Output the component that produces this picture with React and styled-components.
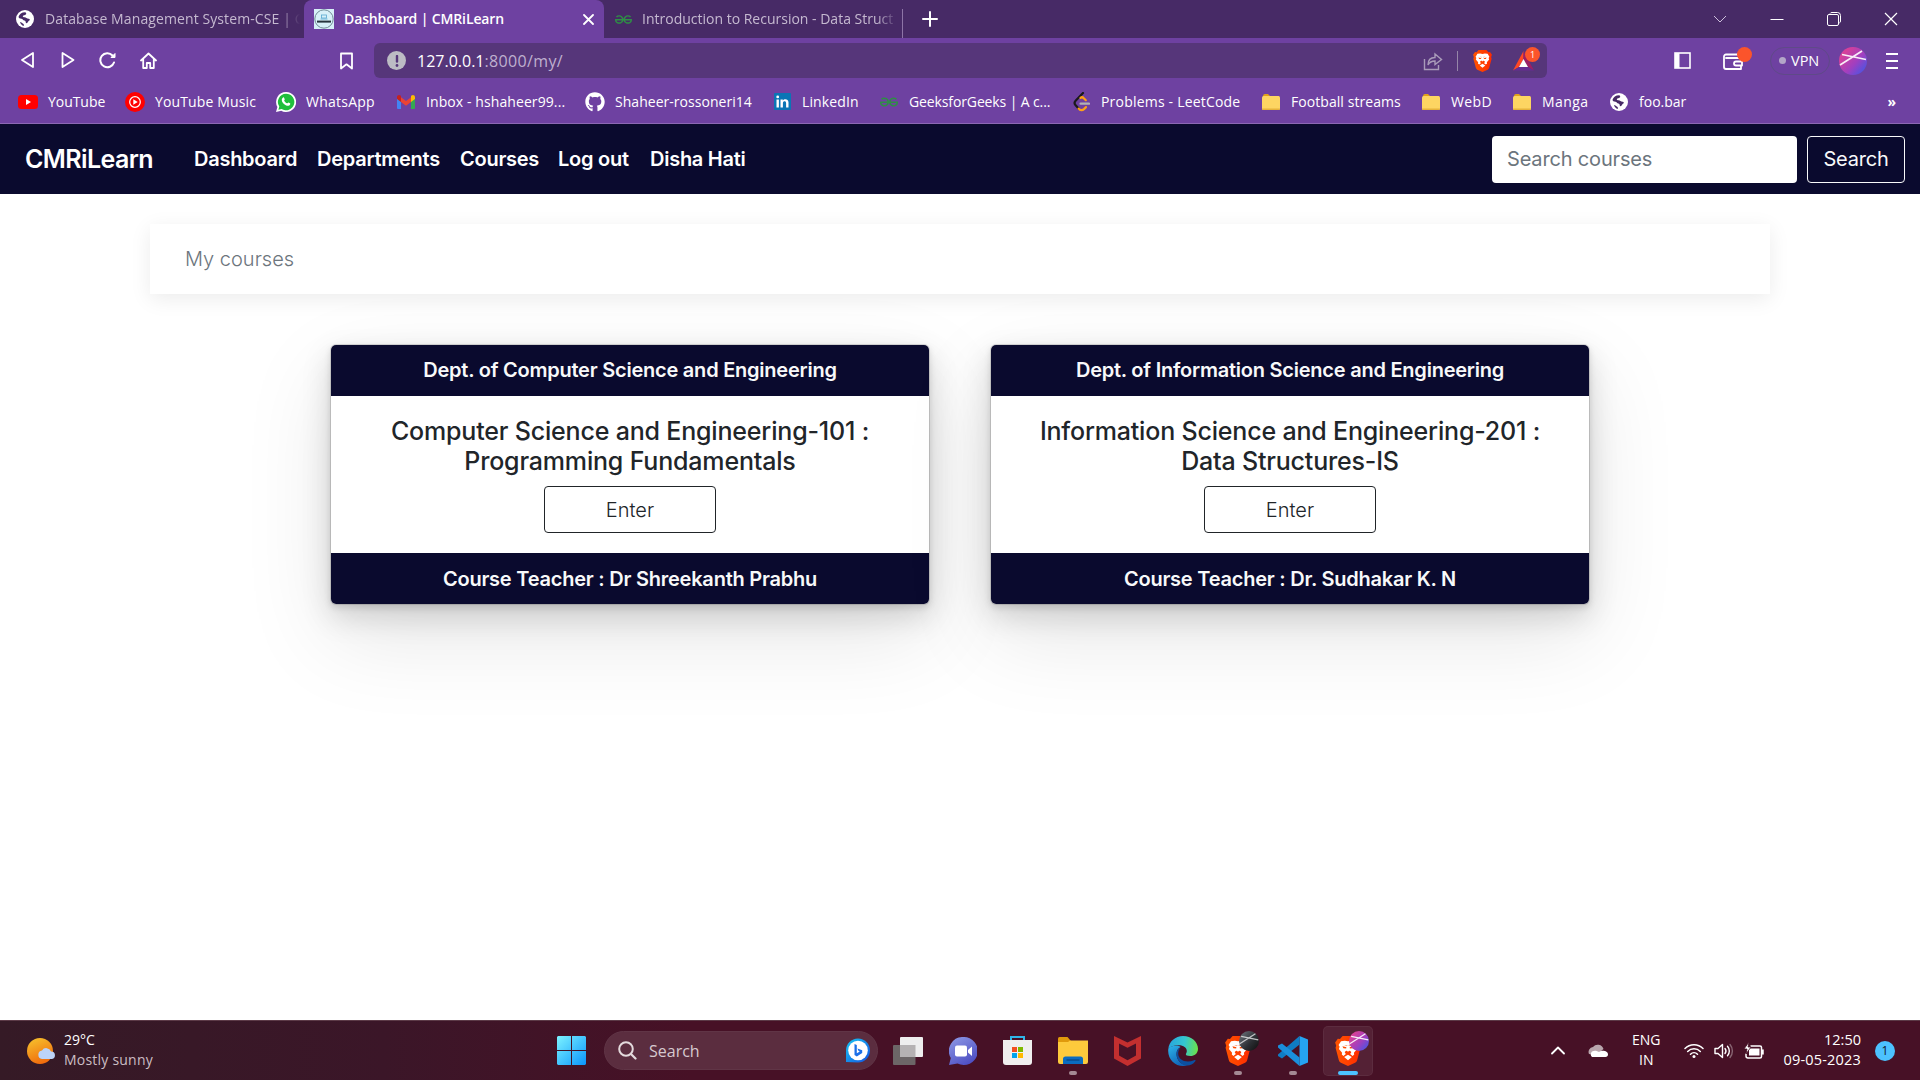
import React from "react";
import styled, { createGlobalStyle } from "styled-components";
import { FaGithub } from "react-icons/fa";
import { SiGeeksforgeeks } from "react-icons/si";

const ui = `"Open Sans", "Noto Sans", sans-serif`;
const web = `Inter, "Liberation Sans", sans-serif`;
const navy = "#0a0a2e";

const Global = createGlobalStyle`
  * { box-sizing: border-box; }
  body { margin: 0; background: #fff; overflow: hidden; }
  svg { display: block; flex: none; }
`;

const Screen = styled.div`
  width: 1920px;
  height: 1080px;
  display: flex;
  flex-direction: column;
  overflow: hidden;
  background: #fff;
  font-family: ${ui};
`;

const Label = styled.span`
  flex: none;
  width: ${(p) => (p.$w ? `${p.$w}px` : "auto")};
  font-size: ${(p) => p.$size || 14}px;
  line-height: 20px;
  letter-spacing: ${(p) => p.$ls || 0}px;
  font-weight: ${(p) => p.$weight || 400};
  color: ${(p) => p.$color || "#fff"};
  white-space: nowrap;
`;

/* ---------- browser chrome ---------- */

const TabStrip = styled.div`
  height: 38px;
  display: flex;
  background: #472a66;
  flex: none;
`;

const Tab = styled.div`
  width: ${(p) => p.$width}px;
  height: 38px;
  padding: 0 ${(p) => p.$right || 4}px 0 ${(p) => p.$left}px;
  display: flex;
  align-items: center;
  gap: ${(p) => p.$gap || 10}px;
  background: ${(p) => (p.$active ? "#6e41a1" : "transparent")};
  border-radius: ${(p) => (p.$active ? "8px 8px 0 0" : "0")};
`;

const TabTitle = styled(Label)`
  flex: 1;
  overflow: hidden;
  mask-image: ${(p) => (p.$fade ? "linear-gradient(90deg, #000 calc(100% - 22px), transparent)" : "none")};
`;

const TabDivider = styled.div`
  width: 1px;
  height: 29px;
  margin-top: 9px;
  background: #8d74a6;
`;

const NewTab = styled.div`
  width: 54px;
  display: flex;
  align-items: center;
  justify-content: center;
`;

const WindowButtons = styled.div`
  margin-left: auto;
  padding-right: 22px;
  display: flex;
  align-items: center;
  gap: 43px;
`;

const Toolbar = styled.div`
  height: 43px;
  flex: none;
  padding: 2px 22px 0 20px;
  display: flex;
  align-items: center;
  background: #6e41a1;
`;

const NavButtons = styled.div`
  display: flex;
  gap: 23.5px;
  width: 318px;
`;

const BookmarkButton = styled.div`
  width: 36px;
`;

const AddressBar = styled.div`
  width: 1173px;
  height: 35px;
  padding: 0 13px;
  display: flex;
  align-items: center;
  background: #56367a;
  border-radius: 6px;
`;

const InfoDot = styled.div`
  width: 19px;
  height: 19px;
  border-radius: 50%;
  margin-right: 11px;
  display: flex;
  align-items: center;
  justify-content: center;
  background: #bcbcc4;
`;

const AddressActions = styled.div`
  margin-left: auto;
  display: flex;
  align-items: center;
`;

const Bar = styled.div`
  width: 1px;
  height: 20px;
  margin: 0 15px 0 14px;
  background: #9686a9;
`;

const Badged = styled.div`
  position: relative;
  margin-left: ${(p) => p.$ml || 0}px;
`;

const Badge = styled.span`
  position: absolute;
  left: ${(p) => p.$x}px;
  top: ${(p) => p.$y}px;
  width: 15px;
  height: 15px;
  border-radius: 50%;
  background: #fb542b;
  color: #fff;
  font-size: 9px;
  line-height: 15px;
  text-align: center;
`;

const ProfileBall = styled.div`
  position: absolute;
  left: 14px;
  top: -5px;
`;

const ToolbarRight = styled.div`
  margin-left: auto;
  display: flex;
  align-items: center;
`;

const Vpn = styled.div`
  width: 60px;
  height: 28px;
  margin: 0 9px 0 27px;
  padding-left: 8px;
  display: flex;
  align-items: center;
  gap: 5px;
  border: 1px solid #5f4a88;
  border-radius: 14px;
`;

const VpnDot = styled.i`
  width: 7px;
  height: 7px;
  border-radius: 50%;
  background: #b3a6c8;
`;

const Bookmarks = styled.div`
  height: 43px;
  flex: none;
  padding: 0 24px 1px 18px;
  display: flex;
  align-items: center;
  background: #6e41a1;
  border-bottom: 1px solid #8c68b4;
`;

const Bookmark = styled.div`
  display: flex;
  align-items: center;
  flex: none;
  gap: 10px;
  margin-right: 20px;
`;

const More = styled(Label)`
  margin-left: auto;
`;

const IconBox = styled.div`
  width: 20px;
  height: 20px;
  flex: none;
  display: flex;
  align-items: center;
  justify-content: center;
`;

/* ---------- page ---------- */

const SiteNav = styled.nav`
  height: 70px;
  flex: none;
  padding: 0 15px 0 25px;
  display: flex;
  align-items: center;
  background: ${navy};
  font-family: ${web};
`;

const Brand = styled.a`
  width: 169px;
  color: #fff;
  font-size: 25px;
  font-weight: 600;
  letter-spacing: -0.6px;
`;

const NavLink = styled.a`
  width: ${(p) => p.$w}px;
  margin-right: 20px;
  white-space: nowrap;
  color: #fff;
  font-size: 20px;
  font-weight: 600;
  letter-spacing: -0.26px;
`;

const SearchInput = styled.div`
  width: 305px;
  height: 47px;
  margin: 0 10px 0 auto;
  padding: 0 15px;
  display: flex;
  align-items: center;
  background: #fff;
  border-radius: 4px;
  color: #6c757d;
  font-size: 20px;
  letter-spacing: -0.17px;
`;

const SearchButton = styled.button`
  width: 98px;
  height: 47px;
  padding: 0;
  background: transparent;
  border: 1px solid #f8f9fa;
  border-radius: 4px;
  color: #f8f9fa;
  font: 400 20px ${web};
  letter-spacing: -0.2px;
`;

const Page = styled.main`
  flex: 1;
  font-family: ${web};
`;

const Heading = styled.div`
  width: 1620px;
  height: 70px;
  margin: 30px auto 0;
  padding-left: 35px;
  display: flex;
  align-items: center;
  background: #fff;
  color: #6c757d;
  font-size: 20px;
  font-weight: 300;
  box-shadow: 0 5px 20px rgba(0, 0, 0, 0.08);
`;

const Cards = styled.div`
  margin-top: 50px;
  padding-left: 330px;
  display: flex;
  gap: 60px;
`;

const Card = styled.article`
  width: 600px;
  height: 261px;
  display: flex;
  flex-direction: column;
  border: 1px solid rgba(0, 0, 0, 0.12);
  border-radius: 6px;
  overflow: hidden;
  background: #fff;
  background-clip: padding-box;
  box-shadow: 0 3px 6px rgba(0, 0, 0, 0.11), 0 12px 30px rgba(0, 0, 0, 0.14), 0 32px 90px rgba(0, 0, 0, 0.1);
`;

const CardBand = styled.div`
  height: 51px;
  flex: none;
  padding-bottom: ${(p) => (p.$top ? 2 : 0)}px;
  display: flex;
  align-items: center;
  justify-content: center;
  background: ${navy};
  color: #f8f9fa;
  font-size: 20px;
  font-weight: 600;
  letter-spacing: -0.23px;
`;

const CardBody = styled.div`
  flex: 1;
  padding-top: 20px;
  display: flex;
  flex-direction: column;
  align-items: center;
`;

const CardTitle = styled.h5`
  margin: 0 0 10px;
  font-size: 25px;
  line-height: 30px;
  font-weight: 500;
  letter-spacing: -0.18px;
  color: #212529;
  text-align: center;
  white-space: pre-line;
`;

const EnterButton = styled.button`
  width: 172px;
  height: 47px;
  padding: 0;
  background: transparent;
  border: 1px solid #212529;
  border-radius: 4px;
  color: #212529;
  font: 300 20px ${web};
`;

/* ---------- taskbar ---------- */

const Taskbar = styled.footer`
  height: 60px;
  flex: none;
  display: flex;
  align-items: center;
  background: linear-gradient(90deg, #351a26 0%, #3b1628 20%, #471126 36%, #471126 100%);
  border-top: 1px solid #5c3a47;
`;

const Weather = styled.div`
  width: 530px;
  padding-left: 26px;
  display: flex;
  align-items: center;
  gap: 8px;
`;

const Stack = styled.div`
  display: flex;
  flex-direction: column;
  padding-bottom: 2px;
  align-items: ${(p) => p.$align || "flex-start"};
`;

const Launcher = styled.div`
  display: flex;
  align-items: center;
`;

const AppSlot = styled.div`
  position: relative;
  width: ${(p) => p.$w || 55}px;
  height: 50px;
  display: flex;
  align-items: center;
  justify-content: center;
  background: ${(p) => (p.$active ? "rgba(255,255,255,.07)" : "transparent")};
  box-shadow: ${(p) => (p.$active ? "inset 0 0 0 1px rgba(255,255,255,.05)" : "none")};
  border-radius: 5px;
  &::after {
    content: "";
    display: ${(p) => (p.$running || p.$active ? "block" : "none")};
    position: absolute;
    bottom: 1px;
    width: ${(p) => (p.$active ? 20 : 8)}px;
    height: 4px;
    border-radius: 2px;
    background: ${(p) => (p.$active ? "#4cc2ff" : "#a48a94")};
  }
`;

const TaskSearch = styled.div`
  width: 274px;
  height: 39px;
  margin: 0 8px 0 5px;
  padding: 0 7px 0 13px;
  display: flex;
  align-items: center;
  border-radius: 20px;
  background: #5b2d3f;
  border: 1px solid #603546;
  & > svg:last-child { margin-left: auto; }
`;

const Tray = styled.div`
  margin-left: auto;
  padding-right: 25px;
  display: flex;
  align-items: center;
`;

const Notice = styled.div`
  width: 20px;
  height: 20px;
  margin-left: 14px;
  border-radius: 50%;
  background: #4cc2ff;
  color: #10202c;
  font-size: 12px;
  line-height: 19px;
  text-align: center;
`;

const Gap = styled.i`
  width: ${(p) => p.$w}px;
  flex: none;
`;

/* ---------- icons ---------- */

const Svg = ({ w = 20, h, vb, children, ...rest }) => (
  <svg width={w} height={h || w} viewBox={vb || `0 0 ${w} ${h || w}`} fill="none" {...rest}>{children}</svg>
);
const line = { stroke: "#fff", strokeWidth: 1.8, strokeLinejoin: "round", strokeLinecap: "round" };

const Globe = () => (
  <Svg w={18}>
    <circle cx="9" cy="9" r="9" fill="#fff" />
    <path d="M9.5 2.2C6 2 3.4 4 2.6 6.600c-.3 1.700 1.300 2 2.800 2.100 1.500.1 1.600 1.800 3 1.900 1.800.1.8 2.400 2.200 2.600 1.400.1 1.200-2 2.600-2.600 1-.5.8-1.800-.6-1.900-2-.1-2.600-1.800-4.400-1.500-1.300.2-2-.9-.8-1.600 1.300-.7 2.700-.6 2.900-1.800z" fill="#472a66" />
    <path d="M4 12c1.600.2 2 1.300 3.200 1.700.9.4.7 1.500.6 2.300C5.900 15.500 4.600 14 4 12z" fill="#472a66" />
  </Svg>
);
const CmrIcon = () => (
  <Svg w={20}>
    <rect width="20" height="20" fill="#d7f0f8" />
    <circle cx="10" cy="10" r="9.200" stroke="#6f8a94" strokeWidth="1" />
    <rect x="7.500" y="6" width="5" height="3" stroke="#56a7cf" strokeWidth=".8" />
    <path d="M6.500 10h7" stroke="#56a7cf" strokeWidth=".8" />
    <path d="M3 12.600h14" stroke="#25343c" strokeWidth="2" />
  </Svg>
);
const YouTube = () => (
  <Svg w={20} h={14}><rect width="20" height="14" rx="3.500" fill="#f00" /><path d="M8 4l5 3-5 3z" fill="#fff" /></Svg>
);
const YtMusic = () => (
  <Svg w={20}><circle cx="10" cy="10" r="10" fill="#f00" /><circle cx="10" cy="10" r="5.300" stroke="#fff" strokeWidth="1.200" /><path d="M8.300 7.300l4.400 2.700-4.400 2.700z" fill="#fff" /></Svg>
);
const WhatsApp = () => (
  <Svg w={20}>
    <path d="M10 0a10 10 0 1 1-4.800 18.700L0 20l1.400-5A10 10 0 0 1 10 0z" fill="#fff" />
    <path d="M10 1.700a8.300 8.300 0 1 1-4.400 15.300L2.400 17.700l.9-3.100A8.300 8.300 0 0 1 10 1.700z" fill="#1fbf3c" />
    <path d="M7 5.400c.6-.4 1 0 1.200.6l.5 1.200c.2.600-.7 1-.5 1.500.6 1.200 1.600 2.100 2.900 2.600.5.100.9-1 1.400-.8l1.500.8c.9.500-.3 2.400-1.600 2.500-3.100.2-7-3.500-6.600-6.300.1-.8.600-1.700 1.200-2.100z" fill="#fff" />
  </Svg>
);
const Gmail = () => (
  <Svg w={18} h={14}>
    <path d="M0 2v11a1 1 0 0 0 1 1h3V5z" fill="#4285f4" />
    <path d="M18 2v11a1 1 0 0 1-1 1h-3V5z" fill="#34a853" />
    <path d="M4 2.200l5 3.800 5-3.800v4.800L9 10.800 4 7z" fill="#ea4335" />
    <path d="M0 2.200C0 .3 2.100-.6 3.500.6L4 1v6L0 4z" fill="#c5221f" />
    <path d="M18 2.200c0-1.900-2.100-2.800-3.500-1.600L14 1v6l4-3z" fill="#fbbc04" />
  </Svg>
);
const LinkedIn = () => (
  <Svg w={17}>
    <rect width="17" height="17" rx="1" fill="#0a75b5" />
    <path d="M2.500 6.500h2.400v8H2.500zM6.500 6.500h2.300v1.200c1.300-2.200 5.700-2 5.700 1.800v5h-2.400v-4.300c0-2.700-3.200-2.400-3.200 0v4.300H6.500z" fill="#fff" /><circle cx="3.700" cy="3.900" r="1.400" fill="#fff" />
  </Svg>
);
const Folder = () => (
  <Svg w={18} h={16}>
    <path d="M1 2a2 2 0 0 1 2-2h3l2 2h9v5H1z" fill="#e0a21a" />
    <rect x="0" y="2" width="18" height="14" rx="1.500" fill="#fdd562" />
    <path d="M0 14.500h18a1.500 1.500 0 0 1-1.500 1.500h-15A1.500 1.500 0 0 1 0 14.500z" fill="#e6b23a" />
  </Svg>
);
const LeetCode = () => (
  <Svg w={17} h={20}>
    <path d="M10 1L2.600 8.800a3.200 3.200 0 0 0 0 4.400l3.200 3.600" stroke="#1a1a1a" strokeWidth="2.200" strokeLinecap="round" />
    <path d="M7.500 5.800c1.300-.9 2.300-.7 3.300.4l2 2M5.600 16.600c1.600 2 3.900 1.900 5.400.5l2-2" stroke="#ffa116" strokeWidth="2.200" strokeLinecap="round" />
    <path d="M7.500 11.700h8.500" stroke="#b3b3b3" strokeWidth="2.200" strokeLinecap="round" />
  </Svg>
);
const BraveLion = ({ w = 19, h = 22 }) => (
  <Svg w={w} h={h} vb="0 0 24 28">
    <defs><linearGradient id="bl" x1="0" x2="1"><stop stopColor="#ff5500" /><stop offset="1" stopColor="#ff2a00" /></linearGradient></defs>
    <path d="M7 0h10l2.500 2.800 2-.3L24 6l-1 3 .6 2-3 11.300c-.4 1.300-1 2-2 2.700L12 28l-6.600-3c-1-.7-1.600-1.400-2-2.700L.4 11 1 9 0 6l2.500-3.500 2 .3z" fill="url(#bl)" />
    <path d="M12 5l3-.6 3.500.5 2.300 3.600-1 1.600.7 2-3 3.600.3 1.500-1.500 1.400-2.300-1.700 1-1.500-.2-1-2.800-1.200V10l3.600-1.500L12 9l-3.600-.5L12 10v3.200l-2.800 1.200-.2 1 1 1.500-2.300 1.700-1.500-1.400.3-1.500-3-3.600.7-2-1-1.600L5.500 4.900 9 4.400z" fill="#fff" />
    <path d="M6.800 9.600l3.900 1-.2 1-2.800-.2zM17.200 9.600l-3.900 1 .2 1 2.800-.2zM10.500 13.600h3L12 15.200z" fill="#ff4a00" />
    <path d="M12 17.500l3.600 2.200-3.600 3-3.600-3z" fill="#fff" />
    <path d="M10.800 8.800h2.400l.4 4.400L12 14.600l-1.600-1.400z" fill="#fff" />
  </Svg>
);
const Bat = () => (
  <Svg w={21} h={20}>
    <path d="M10.500 0L0 19.500l6-3.500 4.500-8z" fill="#ff4724" />
    <path d="M10.500 0L21 19.500 15 16l-4.500-8z" fill="#9e1f63" />
    <path d="M0 19.500h21L15 16H6z" fill="#662d91" />
    <path d="M10.500 8L15 16H6z" fill="#fff" />
  </Svg>
);
const Ball = ({ dark, size = 20 }) => (
  <Svg w={size} vb="0 0 28 28">
    <defs>
      <linearGradient id={dark ? "bd" : "bc"} x1="0.200" y1="0.200" x2="1" y2="0.900">
        <stop stopColor={dark ? "#5a5f66" : "#d6409a"} /><stop offset=".5" stopColor={dark ? "#2b2e33" : "#a03fc0"} /><stop offset="1" stopColor={dark ? "#111" : "#3d58e8"} />
      </linearGradient>
    </defs>
    <circle cx="14" cy="14" r="14" fill={`url(#${dark ? "bd" : "bc"})`} />
    <path d="M1 18L23 4M3 7.500L27 12.500" stroke="#fff" strokeOpacity={dark ? 0.7 : 0.9} strokeWidth="1.700" />
  </Svg>
);
const Edge = () => (
  <Svg w={30} vb="0 0 30 30">
    <defs>
      <linearGradient id="e1" x1="0" y1=".3" x2="1" y2=".4"><stop stopColor="#27a5dd" /><stop offset=".55" stopColor="#35c6cf" /><stop offset="1" stopColor="#69e04d" /></linearGradient>
      <linearGradient id="e2" x1="0" y1="0" x2=".6" y2="1"><stop stopColor="#2db4e8" /><stop offset="1" stopColor="#0f62b8" /></linearGradient>
    </defs>
    <path d="M.3 13C1 5.500 7.300 0 15 0c8.500 0 15 6 15 12.700 0 4.700-3.700 7.300-7.500 7.300-3.500 0-5-1-4.600-2 .5-1 .9-1.700.9-3 0-3-3.200-5.700-8-5.700C5.500 9.300 2 11 .3 13z" fill="url(#e1)" />
    <path d="M.3 13C2 10 5.700 9.300 9.500 9.800c1.500.2 2.500.8 3 1.200-2.700 1.300-4 4-4 7 0 6 5 11.500 11 11-1.500.7-3 1-4.500 1C6.500 30-.8 22.500.3 13z" fill="url(#e2)" />
    <path d="M12.500 12c-1.500 1.400-2.300 3-2.300 5.500 0 6.500 7.800 10 15.800 6.700 1-.4 2 0 1.300 1-2.300 3-5 4.300-7.800 4.300-6.500 0-11-6-11-11.500 0-3 1.500-5.500 4-6z" fill="#0c4fa0" />
  </Svg>
);

// name, icon, label width, letter spacing
const bookmarks = [
  ["YouTube", <YouTube />, 57, -0.05],
  ["YouTube Music", <YtMusic />, 101, 0.13],
  ["WhatsApp", <WhatsApp />, 70, 0.25],
  ["Inbox - hshaheer99...", <Gmail />, 139, 0.09],
  ["Shaheer-rossoneri14", <FaGithub size={20} color="#fff" />, 137, 0.03],
  ["LinkedIn", <LinkedIn />, 57, 0.12],
  ["GeeksforGeeks | A c...", <SiGeeksforgeeks size={18} color="#2f8d46" />, 142, -0.12],
  ["Problems - LeetCode", <LeetCode />, 140, 0.2],
  ["Football streams", <Folder />, 110, 0.06],
  ["WebD", <Folder />, 41, 0.35],
  ["Manga", <Folder />, 47, 0.4],
  ["foo.bar", <Globe />, 47, 0],
];

const links = [["Dashboard", 103], ["Departments", 123], ["Courses", 78], ["Log out", 72], ["Disha Hati", 97]];

const courses = [
  { dept: "Dept. of Computer Science and Engineering", title: "Computer Science and Engineering-101 :\nProgramming Fundamentals", teacher: "Course Teacher : Dr Shreekanth Prabhu" },
  { dept: "Dept. of Information Science and Engineering", title: "Information Science and Engineering-201 :\nData Structures-IS", teacher: "Course Teacher : Dr. Sudhakar K. N" },
];

export default function App() {
  return (
    <Screen>
      <Global />
      <TabStrip>
        <Tab $width={304} $left={16} $gap={11}>
          <Globe />
          <TabTitle $color="#c5b9d0" $ls={0.1} $fade>Database Management System-CSE | C</TabTitle>
        </Tab>
        <Tab $width={300} $left={10} $right={10} $active>
          <CmrIcon />
          <TabTitle $weight={600} $ls={-0.12}>Dashboard | CMRiLearn</TabTitle>
          <Svg w={11}><path d="M1 1l9 9M10 1l-9 9" {...line} /></Svg>
        </Tab>
        <Tab $width={298} $left={11} $gap={10}>
          <SiGeeksforgeeks size={17} color="#2f8d46" />
          <TabTitle $color="#c5b9d0" $fade>Introduction to Recursion - Data Struct</TabTitle>
        </Tab>
        <TabDivider />
        <NewTab><Svg w={16}><path d="M8 1v14M1 8h14" {...line} strokeWidth="2" /></Svg></NewTab>
        <WindowButtons>
          <Svg w={14}><path d="M1 4l6 6 6-6" stroke="#cdbfdb" /></Svg>
          <Svg w={14}><path d="M.5 7.500h13" stroke="#fff" /></Svg>
          <Svg w={14}><rect x=".5" y="2.500" width="11" height="11" rx="1.500" stroke="#fff" /><path d="M3 1.500Q3.500.5 5 .5h5.500a3 3 0 0 1 3 3V9q0 1.500-1.200 2" stroke="#fff" /></Svg>
          <Svg w={14}><path d="M1 1l12 12M13 1L1 13" stroke="#fff" strokeWidth="1.200" /></Svg>
        </WindowButtons>
      </TabStrip>

      <Toolbar>
        <NavButtons>
          <Svg w={16}><path d="M13 1v14L2 8z" {...line} /></Svg>
          <Svg w={16}><path d="M2.500 1v14l11-7z" {...line} /></Svg>
          <Svg w={17}><path d="M15 10.500A7 7 0 1 1 13.500 3.500" {...line} strokeWidth="2" /><path d="M16 1.500v4h-4z" fill="#fff" stroke="#fff" strokeLinejoin="round" /></Svg>
          <Svg w={17}><path d="M1 8.500l7.500-7 7.500 7M3.200 7v9h3.600v-5h3.400v5h3.600V7" {...line} /></Svg>
        </NavButtons>
        <BookmarkButton><Svg w={16} h={18}><path d="M3 1.500h11v15l-5.500-4.200L3 16.500z" {...line} /></Svg></BookmarkButton>
        <AddressBar>
          <InfoDot><Svg w={4} h={12}><path d="M2 1v5.500" stroke="#56367a" strokeWidth="2.400" strokeLinecap="round" /><circle cx="2" cy="10.500" r="1.400" fill="#56367a" /></Svg></InfoDot>
          <Label $size={16}>127.0.0.1</Label>
          <Label $size={16} $ls={0.35} $color="#bfb0cf">:8000/my/</Label>
          <AddressActions>
            <Svg w={20}><path d="M1.500 8v10.500h14V14M5 14c0-5 3-7.500 7-7.500V3l6.500 5.500L12 13.500V10c-3.500 0-5.500 1-7 4z" stroke="#a99bb9" strokeWidth="1.400" /></Svg>
            <Bar />
            <BraveLion />
            <Badged $ml={21}><Bat /><Badge $x={12} $y={-4}>1</Badge></Badged>
          </AddressActions>
        </AddressBar>
        <ToolbarRight>
          <Svg w={17}><rect x="1" y="1" width="15" height="15" stroke="#fff" strokeWidth="1.600" /><path d="M1 1h4.500v15H1z" fill="#fff" /></Svg>
          <Badged $ml={32}>
            <Svg w={20} h={18}><path d="M16 5V2.500H3A2 2 0 0 0 1 4.500V15a2 2 0 0 0 2 2h15V6H3" {...line} /><path d="M19 9.500h-6a2 2 0 0 0 0 4h6z" {...line} fill="#6e41a1" /></Svg>
            <Badge $x={14} $y={-5} />
          </Badged>
          <Vpn><VpnDot /><Label $size={14.5}>VPN</Label></Vpn>
          <Ball size={28} />
          <Gap $w={19} />
          <Svg w={12} h={18}><path d="M0 2h12M0 9h12M0 16h12" stroke="#fff" strokeWidth="1.800" /></Svg>
        </ToolbarRight>
      </Toolbar>

      <Bookmarks>
        {bookmarks.map(([name, icon, w, ls]) => (
          <Bookmark key={name}><IconBox>{icon}</IconBox><Label $w={w} $ls={ls}>{name}</Label></Bookmark>
        ))}
        <More $weight={700}>»</More>
      </Bookmarks>

      <SiteNav>
        <Brand>CMRiLearn</Brand>
        {links.map(([t, w]) => <NavLink key={t} $w={w}>{t}</NavLink>)}
        <SearchInput>Search courses</SearchInput>
        <SearchButton>Search</SearchButton>
      </SiteNav>

      <Page>
        <Heading>My courses</Heading>
        <Cards>
          {courses.map((c) => (
            <Card key={c.dept}>
              <CardBand $top>{c.dept}</CardBand>
              <CardBody>
                <CardTitle>{c.title}</CardTitle>
                <EnterButton>Enter</EnterButton>
              </CardBody>
              <CardBand>{c.teacher}</CardBand>
            </Card>
          ))}
        </Cards>
      </Page>

      <Taskbar>
        <Weather>
          <Svg w={30} h={28}>
            <defs><linearGradient id="sun" x1=".2" y1="0" x2=".6" y2="1"><stop stopColor="#f6c02c" /><stop offset="1" stopColor="#f0690c" /></linearGradient></defs>
            <circle cx="14" cy="14" r="13" fill="url(#sun)" />
            <path d="M16 22a4.300 4.300 0 0 1 0-8.500 5 5 0 0 1 9 1 3.800 3.800 0 0 1 1 7.500z" fill="#bcd3f8" />
          </Svg>
          <Stack>
            <Label>29°C</Label>
            <Label $ls={0.22} $color="#cbbdc3">Mostly sunny</Label>
          </Stack>
        </Weather>
        <Launcher>
          <Gap $w={14} />
          <AppSlot>
            <Svg w={29}>
              <defs><linearGradient id="win" x1="0" y1="0" x2="1" y2="1"><stop stopColor="#7df3ff" /><stop offset="1" stopColor="#0a95fc" /></linearGradient></defs>
              <path d="M1 0h13v14H0V1zM15 0h13l1 1v13H15zM0 15h14v14H1l-1-1zM15 15h14v13l-1 1H15z" fill="url(#win)" />
            </Svg>
          </AppSlot>
          <TaskSearch>
            <Svg w={19}><circle cx="8" cy="8" r="6.800" stroke="#e4dadd" strokeWidth="2" /><path d="M13 13l4.500 4.500" stroke="#e4dadd" strokeWidth="2.200" strokeLinecap="round" /></Svg>
            <Gap $w={12} />
            <Label $size={16} $color="#d6c9cf">Search</Label>
            <Svg w={25}>
              <defs><linearGradient id="bing" x1="0" y1="0" x2="1" y2="1"><stop stopColor="#17c8f5" /><stop offset="1" stopColor="#1450e0" /></linearGradient></defs>
              <path d="M1 24V12.500A12 12 0 1 1 13 24.500z" fill="url(#bing)" /><circle cx="13" cy="12.500" r="9.800" fill="#fff" />
              <path d="M9.500 6l2.300.9v8.300l3-1.700-1.400-.7-1-2.300 4.800 1.800v2.600l-5.400 3.500-2.300-1.400z" fill="#1b6fe8" />
            </Svg>
          </TaskSearch>
          <AppSlot $w={44}>
            <Svg w={30} h={28}><rect y="8" width="22.500" height="20" rx="1" fill="#6c6667" /><rect x="7" y="0" width="23" height="20" rx="1" fill="#eee" /><path d="M7 8h15.500v12H7z" fill="#b5b2b3" /></Svg>
          </AppSlot>
          <Gap $w={5} />
          <AppSlot>
            <Svg w={28}>
              <defs><linearGradient id="chat" x1="0" y1="0" x2=".6" y2="1"><stop stopColor="#8f9be6" /><stop offset="1" stopColor="#4f50c4" /></linearGradient></defs>
              <path d="M14.500 0a14 14 0 1 1-6 26.500L0 28l1.800-7A14 14 0 0 1 14.500 0z" fill="url(#chat)" /><rect x="6" y="8.500" width="12" height="11" rx="2" fill="#fff" /><path d="M19 13l4-3.500v9.500l-4-3.500z" fill="#fff" />
            </Svg>
          </AppSlot>
          <AppSlot>
            <Svg w={29}>
              <path d="M8 5V1h13v4" stroke="#2fb5e8" strokeWidth="2" /><path d="M0 4h29v22a3 3 0 0 1-3 3H3a3 3 0 0 1-3-3z" fill="#f0efef" />
              <path d="M9 11h5v5H9z" fill="#f25022" /><path d="M15 11h5v5h-5z" fill="#7fba00" /><path d="M9 17h5v5H9z" fill="#00a4ef" /><path d="M15 17h5v5h-5z" fill="#ffb900" />
            </Svg>
          </AppSlot>
          <AppSlot $running>
            <Svg w={30} h={27}><path d="M0 1.500Q0 0 1.500 0h8l3 3.500V8H0z" fill="#e09a0c" /><path d="M0 5h10l2-1.500h18V25q0 2-2 2H2q-2 0-2-2z" fill="#fdca3c" /><path d="M5 27v-5a2.500 2.500 0 0 1 2.500-2.500h15A2.500 2.500 0 0 1 25 22v5z" fill="#0a6cc0" /><path d="M8.500 23h13" stroke="#084b8e" strokeWidth="1.500" /></Svg>
          </AppSlot>
          <AppSlot>
            <Svg w={27} h={30}><path d="M0 0l13.500 6.500L27 0v22.500L13.500 30 0 22.500zM5 7.500v12l8.500 4.700 8.500-4.700v-12l-8.500 4.300z" fill="#c32f2f" fillRule="evenodd" /></Svg>
          </AppSlot>
          <AppSlot><Edge /></AppSlot>
          <AppSlot $running>
            <Badged><BraveLion w={26} h={30} /><ProfileBall><Ball dark /></ProfileBall></Badged>
          </AppSlot>
          <AppSlot $running>
            <Svg w={30}>
              <path d="M21.500 0L30 3.500v23L21.500 30z" fill="#25a4f1" />
              <path d="M21.500 0v8.500L4 22.500 0 20v-1.500z" fill="#0f7cc4" />
              <path d="M0 9.500L4 7.500l17.500 14V30L0 11.500z" fill="#1a8fdc" />
            </Svg>
          </AppSlot>
          <Gap $w={3} />
          <AppSlot $w={50} $active>
            <Badged><BraveLion w={26} h={30} /><ProfileBall><Ball /></ProfileBall></Badged>
          </AppSlot>
        </Launcher>
        <Tray>
          <Svg w={14} h={9}><path d="M1 7.500l6-6 6 6" {...line} /></Svg>
          <Gap $w={23} />
          <Svg w={20} h={13}><path d="M1 10a5 5 0 0 1 4-7 6 6 0 0 1 10.500 2L8 11z" fill="#b9a6ad" /><path d="M4 13a4 4 0 0 1 0-5.500C7 6 9 7 11 8c2-2 9-2 9 2.500 0 1.500-1 2.500-2.500 2.500z" fill="#fff" /></Svg>
          <Gap $w={24} />
          <Stack $align="center"><Label>ENG</Label><Label>IN</Label></Stack>
          <Gap $w={23} />
          <Svg w={20} h={15}><path d="M1 5.500a12.500 12.500 0 0 1 18 0M3.700 8.500a8.800 8.800 0 0 1 12.600 0M6.500 11.200a5 5 0 0 1 7 0" {...line} strokeWidth="1.500" /><circle cx="10" cy="13.500" r="1.500" fill="#fff" /></Svg>
          <Gap $w={10} />
          <Svg w={20} h={16}><path d="M1 5.500h3L8.500 1.500v13L4 10.500H1zM11 5.500a4 4 0 0 1 0 5M13.500 3.300a7 7 0 0 1 0 9.400" {...line} strokeWidth="1.400" /><path d="M16 1.500a10 10 0 0 1 0 13" {...line} strokeWidth="1.400" strokeOpacity=".35" /></Svg>
          <Gap $w={10} />
          <Svg w={20} h={17}><path d="M7 4h9a1.500 1.500 0 0 1 1.500 1.500v9A1.500 1.500 0 0 1 16 16H4a2 2 0 0 1-2-2v-2M19 8v4" {...line} strokeWidth="1.500" /><rect x="5" y="6.500" width="10.500" height="7" fill="#fff" /><path d="M5 0L0 7h3l-1 5 5-7H4z" fill="#fff" stroke="#471126" strokeWidth=".8" /></Svg>
          <Gap $w={20} />
          <Stack $align="flex-end"><Label $size={14.5}>12:50</Label><Label $size={14.5} $ls={0.18}>09-05-2023</Label></Stack>
          <Notice>1</Notice>
        </Tray>
      </Taskbar>
    </Screen>
  );
}
